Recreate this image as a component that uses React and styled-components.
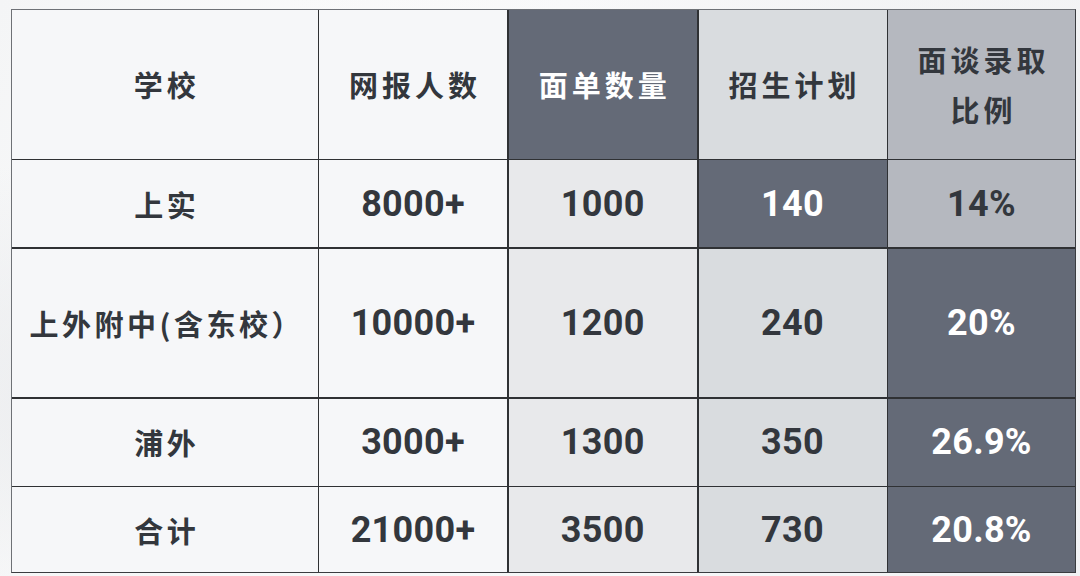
import React from "react";
import styled, { createGlobalStyle } from "styled-components";

const GlobalStyle = createGlobalStyle`
  html, body {
    margin: 0;
    padding: 0;
    width: 1080px;
    height: 576px;
    overflow: hidden;
    background: #fbfbfc;
  }
`;

const tones = {
  pale: { bg: "#f6f7f9", fg: "#33373d" },
  soft: { bg: "#e8e9eb", fg: "#33373d" },
  light: { bg: "#d9dcdf", fg: "#33373d" },
  mid: { bg: "#b5b8bf", fg: "#33373d" },
  dark: { bg: "#646a77", fg: "#ffffff" }
};

const rows = [
  {
    height: 87,
    cells: [
      ["上实", "pale", true],
      ["8000+", "pale"],
      ["1000", "soft"],
      ["140", "dark"],
      ["14%", "mid"]
    ]
  },
  {
    height: 150,
    cells: [
      ["上外附中(含东校）", "pale", true],
      ["10000+", "pale"],
      ["1200", "soft"],
      ["240", "light"],
      ["20%", "dark"]
    ]
  },
  {
    height: 87,
    cells: [
      ["浦外", "pale", true],
      ["3000+", "pale"],
      ["1300", "soft"],
      ["350", "light"],
      ["26.9%", "dark"]
    ]
  },
  {
    height: 85,
    cells: [
      ["合计", "pale", true],
      ["21000+", "pale"],
      ["3500", "soft"],
      ["730", "light"],
      ["20.8%", "dark"]
    ]
  }
];

const headers = [
  ["学校", "pale"],
  ["网报人数", "pale"],
  ["面单数量", "dark"],
  ["招生计划", "light"],
  ["面谈录取\n比例", "mid"]
];

export default function App() {
  return (
    <>
      <GlobalStyle />
      <Page>
        <Sheet>
          <Row height={150}>
            {headers.map(([text, tone]) => (
              <Cell key={text} tone={tone}>
                <HeadText>{text}</HeadText>
              </Cell>
            ))}
          </Row>
          {rows.map((row, i) => (
            <Row key={i} height={row.height}>
              {row.cells.map(([text, tone, isName], j) => (
                <Cell key={j} tone={tone}>
                  {isName ? <NameText>{text}</NameText> : <NumText>{text}</NumText>}
                </Cell>
              ))}
            </Row>
          ))}
        </Sheet>
      </Page>
    </>
  );
}

const Page = styled.div`
  width: 1080px;
  height: 576px;
  box-sizing: border-box;
  padding: 9px 4px 3px 11px;
  background:
    radial-gradient(ellipse at 20% 70%, rgba(226, 228, 231, 0.7), transparent 45%),
    radial-gradient(ellipse at 80% 20%, rgba(236, 237, 239, 0.6), transparent 50%),
    linear-gradient(120deg, #f4f5f6, #fdfdfd 40%, #f1f2f4);
`;

const Sheet = styled.div`
  display: flex;
  flex-direction: column;
  gap: 1.5px;
  height: 100%;
  background: #2f3134;
  border: 1.5px solid #6e7176;
  border-right-color: #3a3c40;
  border-bottom-color: #3a3c40;
  box-sizing: border-box;
`;

const Row = styled.div`
  display: grid;
  grid-template-columns: 305.5px 188px 188.5px 188px 1fr;
  gap: 1.5px;
  height: ${(p) => p.height}px;
  flex: ${(p) => (p.height >= 150 ? "1 1 auto" : "0 0 auto")};
`;

const Cell = styled.div`
  display: flex;
  align-items: center;
  justify-content: center;
  text-align: center;
  background: ${(p) => tones[p.tone].bg};
  color: ${(p) => tones[p.tone].fg};
`;

const HeadText = styled.div`
  font-family: "Noto Sans CJK SC", "Noto Sans", sans-serif;
  font-weight: 700;
  font-size: 29px;
  letter-spacing: 4px;
  line-height: 50px;
  white-space: pre-line;
  padding-left: 4px;
`;

const NameText = styled(HeadText)`
  letter-spacing: 3.5px;
`;

const NumText = styled.div`
  font-family: Roboto, "Noto Sans", sans-serif;
  font-weight: 700;
  font-size: 36px;
  letter-spacing: 0.3px;
`;
